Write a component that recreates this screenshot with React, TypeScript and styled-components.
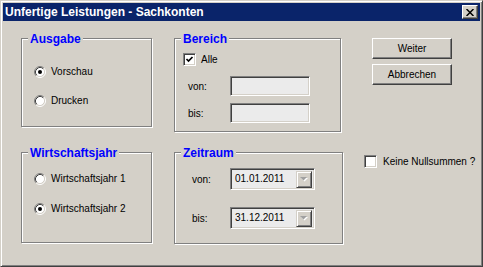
import React from "react";
import styled, { createGlobalStyle } from "styled-components";

const GlobalStyle = createGlobalStyle`
  html, body {
    margin: 0;
    padding: 0;
    background: #d4d0c8;
  }
  body {
    font-family: "Liberation Sans", Arial, sans-serif;
    font-size: 10px;
    color: #000;
  }
`;

const FACE = "#d4d0c8";

/**
 * 클래식 윈도우 다이얼로그
 */
const Window = styled.div`
  box-sizing: border-box;
  width: 483px;
  height: 267px;
  padding: 2px;
  border: 1px solid;
  border-color: ${FACE} #404040 #404040 ${FACE};
  box-shadow: inset 1px 1px 0 #fff, inset -1px -1px 0 #808080;
  background: ${FACE};
  display: flex;
  flex-direction: column;
`;

const TitleBar = styled.div`
  height: 18px;
  background: #0a246a;
  display: flex;
  align-items: center;
  justify-content: space-between;
  padding: 0 2px;
`;

const Title = styled.span`
  color: #fff;
  font-weight: bold;
  font-size: 12px;
  line-height: 18px;
  white-space: nowrap;
`;

const CloseButton = styled.span`
  box-sizing: border-box;
  width: 16px;
  height: 14px;
  display: flex;
  align-items: center;
  justify-content: center;
  background: ${FACE};
  border: 1px solid;
  border-color: #fff #404040 #404040 #fff;
  box-shadow: inset -1px -1px 0 #808080;
`;

const Body = styled.div`
  display: flex;
  align-items: flex-start;
  padding: 17px 0 0 18px;
`;

const Groups = styled.div`
  display: grid;
  grid-template-columns: 131px 169px;
  grid-template-rows: 94px auto;
  column-gap: 22px;
  row-gap: 20px;
  align-items: start;
`;

const Group = styled.div<{ $w?: number; $h: number; $pt: number; $pl: number; $gap: number }>`
  position: relative;
  box-sizing: border-box;
  width: ${(p) => (p.$w ? `${p.$w}px` : "auto")};
  height: ${(p) => p.$h}px;
  border: 1px solid #808080;
  box-shadow: inset 1px 1px 0 #fff, 1px 1px 0 #fff;
  padding: ${(p) => p.$pt}px 0 0 ${(p) => p.$pl}px;
  display: flex;
  flex-direction: column;
  gap: ${(p) => p.$gap}px;
`;

const Legend = styled.span`
  position: absolute;
  top: -7px;
  left: 6px;
  padding: 0 2px;
  background: ${FACE};
  color: #0000ff;
  font-weight: bold;
  font-size: 12px;
  line-height: 14px;
`;

const OptionRow = styled.label<{ $size?: number }>`
  display: flex;
  align-items: center;
  gap: 5px;
  height: ${(p) => p.$size ?? 12}px;
  line-height: 12px;
  white-space: nowrap;
`;

const FieldRow = styled.div<{ $label: number; $indent?: number; $top?: number }>`
  display: flex;
  align-items: center;
  margin-left: ${(p) => p.$indent ?? 0}px;
  margin-top: ${(p) => p.$top ?? 0}px;

  & > span {
    width: ${(p) => p.$label}px;
  }
`;

const sunken = `
  box-sizing: border-box;
  border: 1px solid;
  border-color: #808080 #fff #fff #808080;
  box-shadow: inset 1px 1px 0 #404040, inset -1px -1px 0 ${FACE};
`;

const TextField = styled.div`
  ${sunken}
  width: 80px;
  height: 20px;
  background: #ebebeb;
`;

const Combo = styled.div`
  ${sunken}
  width: 85px;
  height: 22px;
  background: #ebebeb;
  display: flex;
  align-items: center;
  padding: 2px 2px 2px 4px;
`;

const ComboText = styled.span`
  flex: 1;
  font-size: 10px;
  line-height: 16px;
`;

const ComboArrow = styled.span`
  box-sizing: border-box;
  width: 16px;
  height: 17px;
  display: flex;
  align-items: center;
  justify-content: center;
  background: ${FACE};
  border: 1px solid;
  border-color: ${FACE} #404040 #404040 ${FACE};
  box-shadow: inset 1px 1px 0 #fff, inset -1px -1px 0 #808080;
`;

const Side = styled.div`
  display: flex;
  flex-direction: column;
  margin-left: 21px;
`;

const Button = styled.button`
  box-sizing: border-box;
  width: 80px;
  height: 21px;
  margin: 0 0 5px 8px;
  padding: 0;
  font-family: inherit;
  font-size: 10px;
  color: #000;
  background: ${FACE};
  border: 1px solid;
  border-color: #fff #404040 #404040 #fff;
  box-shadow: inset -1px -1px 0 #808080;
`;

const CheckBox = styled.span`
  ${sunken}
  width: 13px;
  height: 13px;
  background: #fff;
  display: flex;
  align-items: center;
  justify-content: center;
  flex-shrink: 0;
`;

const SideCheck = styled(OptionRow)`
  margin-top: 65px;
  gap: 6px;
`;

const Radio = ({ checked }: { checked?: boolean }) => (
  <svg width="12" height="12" viewBox="0 0 12 12">
    <circle cx="6" cy="6" r="4.5" fill="#fff" />
    <path d="M2.11 9.89 A5.5 5.5 0 0 1 9.89 2.11" fill="none" stroke="#808080" />
    <path d="M9.89 2.11 A5.5 5.5 0 0 1 2.11 9.89" fill="none" stroke="#fff" />
    <path d="M2.82 9.18 A4.5 4.5 0 0 1 9.18 2.82" fill="none" stroke="#404040" />
    <path d="M9.18 2.82 A4.5 4.5 0 0 1 2.82 9.18" fill="none" stroke={FACE} />
    {checked && <circle cx="6" cy="6" r="2" fill="#000" />}
  </svg>
);

const Check = ({ checked }: { checked?: boolean }) => (
  <CheckBox>
    {checked && (
      <svg width="9" height="9" viewBox="0 0 9 9">
        <path d="M1.5 4 L3.5 6 L7.5 2" fill="none" stroke="#000" strokeWidth="1.7" />
      </svg>
    )}
  </CheckBox>
);

const Arrow = () => (
  <svg width="8" height="5" viewBox="0 0 8 5">
    <path d="M1 1 H8 L4.5 4.5 Z" fill="#fff" />
    <path d="M0 0 H7 L3.5 3.5 Z" fill="#a0a0a0" />
  </svg>
);

const DateField = ({ label, value }: { label: string; value: string }) => (
  <FieldRow $label={38}>
    <span>{label}</span>
    <Combo>
      <ComboText>{value}</ComboText>
      <ComboArrow>
        <Arrow />
      </ComboArrow>
    </Combo>
  </FieldRow>
);

export default function App() {
  return (
    <>
      <GlobalStyle />
      <Window>
        <TitleBar>
          <Title>Unfertige Leistungen - Sachkonten</Title>
          <CloseButton>
            <svg width="8" height="7" viewBox="0 0 8 7">
              <path d="M0.5 0 L7.5 7 M7.5 0 L0.5 7" stroke="#000" strokeWidth="1.5" />
            </svg>
          </CloseButton>
        </TitleBar>
        <Body>
          <Groups>
            <Group $w={131} $h={89} $pt={27} $pl={12} $gap={17}>
              <Legend>Ausgabe</Legend>
              <OptionRow>
                <Radio checked />
                Vorschau
              </OptionRow>
              <OptionRow>
                <Radio />
                Drucken
              </OptionRow>
            </Group>
            <Group $w={167} $h={94} $pt={14} $pl={8} $gap={0}>
              <Legend>Bereich</Legend>
              <OptionRow $size={13}>
                <Check checked />
                Alle
              </OptionRow>
              <FieldRow $label={42} $indent={5} $top={10}>
                <span>von:</span>
                <TextField />
              </FieldRow>
              <FieldRow $label={42} $indent={5} $top={7}>
                <span>bis:</span>
                <TextField />
              </FieldRow>
            </Group>
            <Group $w={131} $h={91} $pt={20} $pl={12} $gap={18}>
              <Legend>Wirtschaftsjahr</Legend>
              <OptionRow>
                <Radio />
                Wirtschaftsjahr 1
              </OptionRow>
              <OptionRow>
                <Radio checked />
                Wirtschaftsjahr 2
              </OptionRow>
            </Group>
            <Group $w={169} $h={92} $pt={15} $pl={17} $gap={17}>
              <Legend>Zeitraum</Legend>
              <DateField label="von:" value="01.01.2011" />
              <DateField label="bis:" value="31.12.2011" />
            </Group>
          </Groups>
          <Side>
            <Button>Weiter</Button>
            <Button>Abbrechen</Button>
            <SideCheck $size={13}>
              <Check />
              Keine Nullsummen ?
            </SideCheck>
          </Side>
        </Body>
      </Window>
    </>
  );
}
